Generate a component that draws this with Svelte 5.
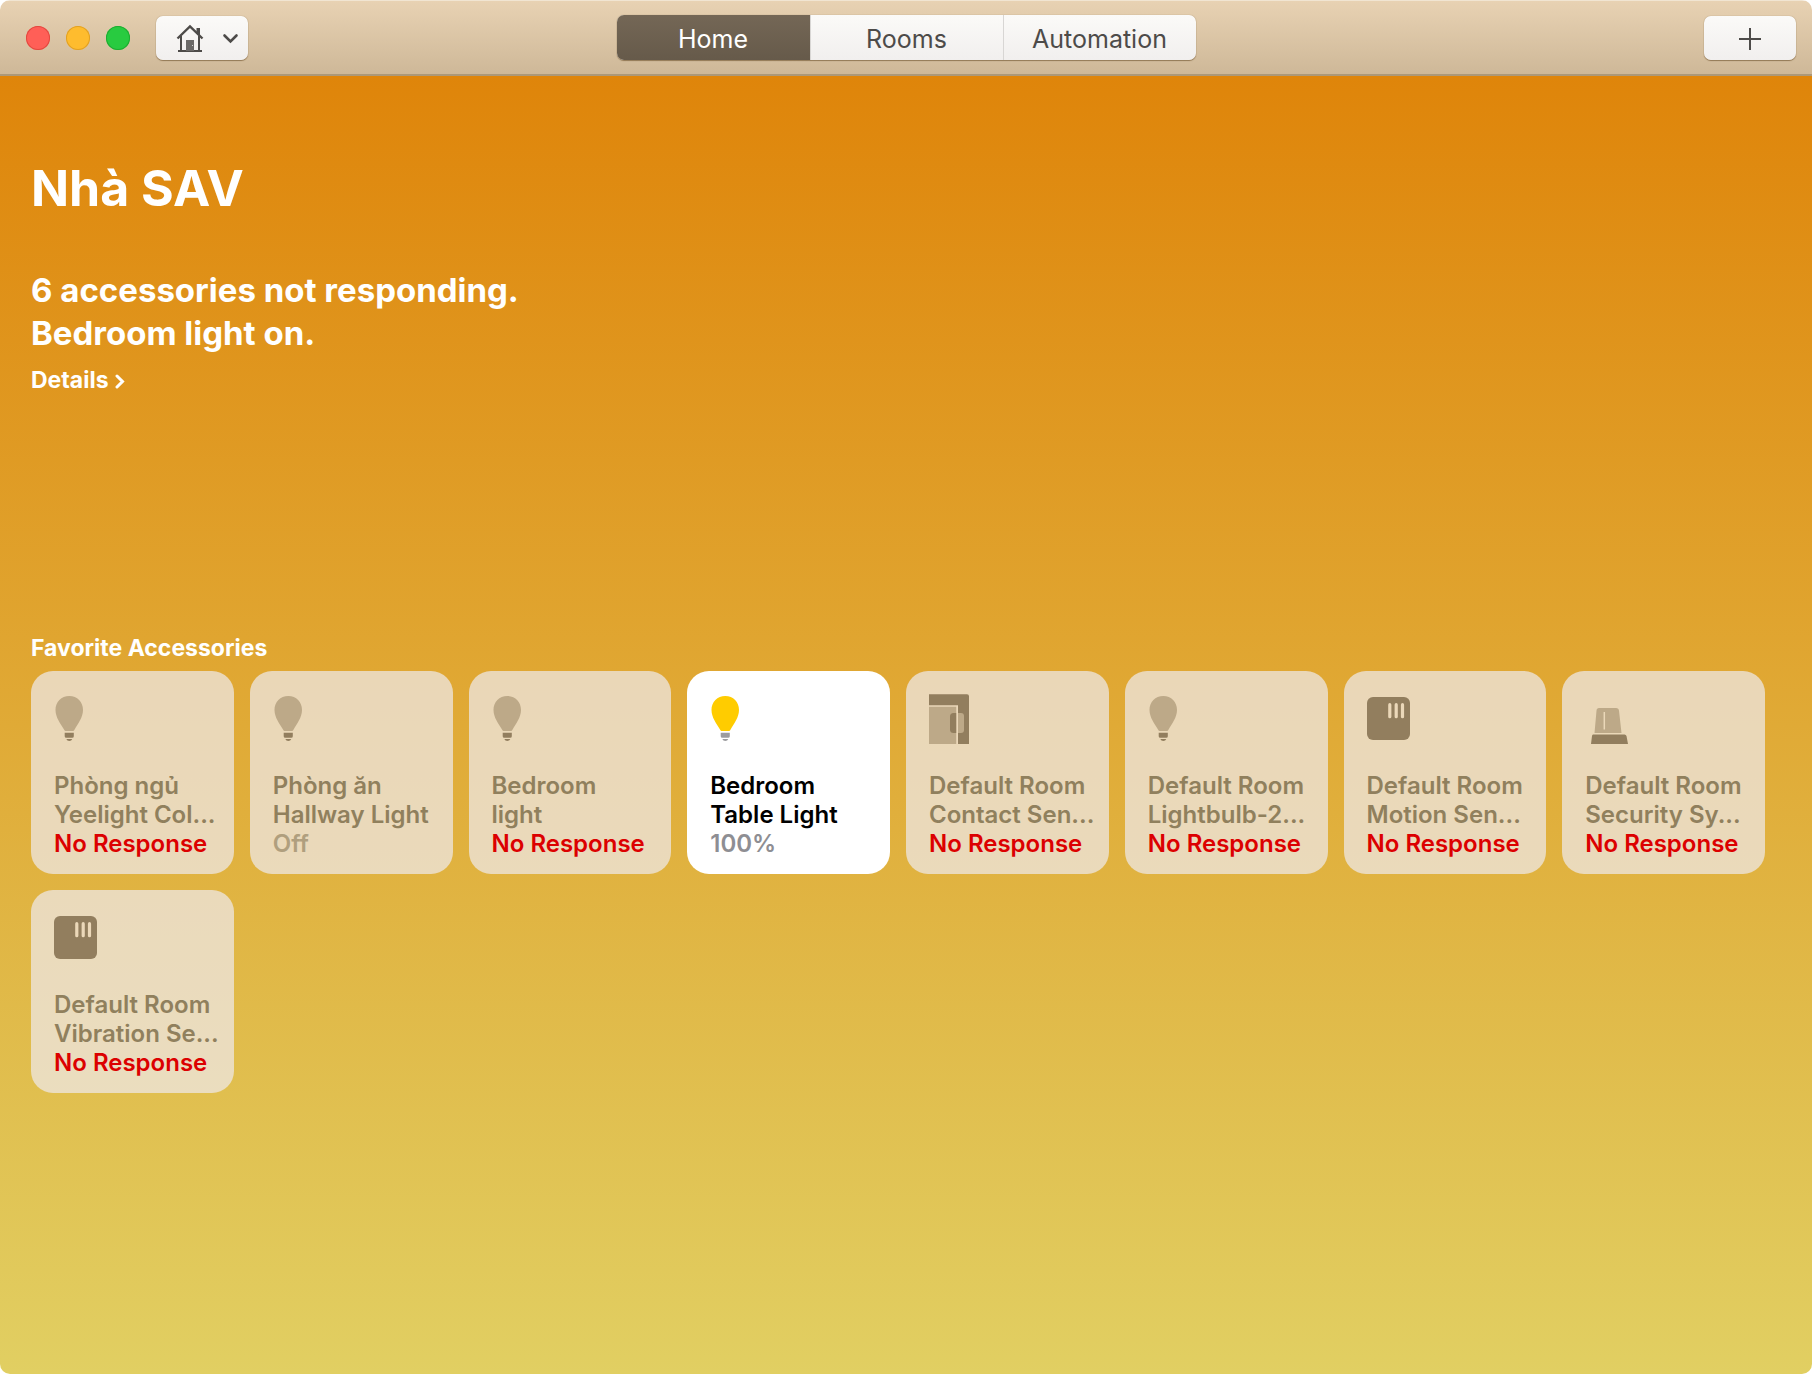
<script>
	let tabs = ['Home', 'Rooms', 'Automation'];
	let current = 'Home';

	let accessories = [
		{ icon: 'bulb', room: 'Phòng ngủ', name: 'Yeelight Col...', status: 'No Response' },
		{ icon: 'bulb', room: 'Phòng ăn', name: 'Hallway Light', status: 'Off' },
		{ icon: 'bulb', room: 'Bedroom', name: 'light', status: 'No Response' },
		{ icon: 'bulb', room: 'Bedroom', name: 'Table Light', status: '100%', on: true },
		{ icon: 'contact', room: 'Default Room', name: 'Contact Sen...', status: 'No Response' },
		{ icon: 'bulb', room: 'Default Room', name: 'Lightbulb-2...', status: 'No Response' },
		{ icon: 'sensor', room: 'Default Room', name: 'Motion Sen...', status: 'No Response' },
		{ icon: 'siren', room: 'Default Room', name: 'Security Sy...', status: 'No Response' },
		{ icon: 'sensor', room: 'Default Room', name: 'Vibration Se...', status: 'No Response' }
	];

	let toggle = (item) => {
		if (item.status === 'No Response') return;
		item.on = !item.on;
		item.status = item.on ? '100%' : 'Off';
		accessories = accessories;
	}
</script>

<svelte:head>
	<title>Home</title>
</svelte:head>

<div class="window">
	<header>
		<div class="left">
			<div class="lights">
				<button class="light close" aria-label="Close"></button>
				<button class="light minimize" aria-label="Minimize"></button>
				<button class="light zoom" aria-label="Zoom"></button>
			</div>
			<button class="tool" aria-label="Choose home">
				<svg width="92" height="44" viewBox="0 0 92 44" fill="none" stroke="#4d4b49">
					<path d="M21.5 22.5L34 10.5l12.5 12" stroke-width="2.4" />
					<path d="M40.5 12H44v8l-3.5-3.500z" fill="#4d4b49" stroke="none" />
					<path d="M25 20v15M43 20v15M22 35h24" stroke-width="2" />
					<path d="M30 24h8v11h-8z" fill="#6b6967" stroke="none" />
					<circle cx="36.5" cy="29.5" r=".5" fill="#fff" stroke="none" />
					<path d="M68.5 19.5l6 6 6-6" stroke-width="2.6" stroke-linecap="round" />
				</svg>
			</button>
		</div>
		<nav>
			{#each tabs as tab}
				<button class:active={tab === current} on:click={() => current = tab}>{tab}</button>
			{/each}
		</nav>
		<div class="right">
			<button class="tool" aria-label="Add">
				<svg width="92" height="44" viewBox="0 0 92 44" stroke="#4d4b49" stroke-width="2">
					<path d="M35 23h22M46 12v22" />
				</svg>
			</button>
		</div>
	</header>

	<main>
		<h1>Nhà SAV</h1>
		<p class="summary">6 accessories not responding.<br>Bedroom light on.</p>
		<a class="details" href="#details">
			Details
			<svg width="10" height="16" viewBox="0 0 10 16" fill="none" stroke="#fff" stroke-width="3" stroke-linecap="round">
				<path d="M2 3l5.5 5.5L2 14" />
			</svg>
		</a>

		<h2>Favorite Accessories</h2>
		<div class="grid">
			{#each accessories as item}
				<button class="tile" class:on={item.on} on:click={() => toggle(item)}>
					<svg width="50" height="50" viewBox="0 0 50 50">
						{#if item.icon === 'bulb'}
							<path class="soft" d="M15.3 2C7.3 2 1.5 8 1.5 16c0 7.5 5 13.5 8.5 19.5.6 1 1 1.500 2 1.500h6.600c1 0 1.400-.5 2-1.500C24 29.500 29 23.500 29 16 29 8 23.300 2 15.300 2z" />
							<path class="base" d="M10.700 38.800h9.100v3.400q0 1.600-1.600 1.600h-5.900q-1.600 0-1.600-1.600zM12.300 45h6q-.8 2-3 2t-3-2z" />
						{:else if item.icon === 'contact'}
							<path class="base" d="M0 .3h38q2 0 2 2V50H29V11.200H0z" />
							<path class="soft" d="M0 12.800h27.500V50H0z" />
							<path class="base" d="M27.500 19v20h-3q-3.500 0-3.500-3.500v-13q0-3.500 3.500-3.500z" />
							<path class="soft" d="M29 19h3q3 0 3 3v14q0 3-3 3h-3z" />
							<path class="line" d="M28.250 12v38" />
						{:else if item.icon === 'sensor'}
							<rect class="base" y="3" width="43" height="43" rx="6" />
							<path class="slots" d="M22.800 10.700v12M29.200 10.700v12M35.500 10.700v12" />
						{:else}
							<path class="soft" d="M14 14h17q2.700 0 3 2.700L36.500 39h-27l2-22.300q.2-2.700 2.500-2.700z" />
							<path class="line" d="M19.300 18v17.500" />
							<path class="base" d="M7.500 40.600h32q1.500 0 2 1.500l1.500 7.900H6l1-7.900q.2-1.500 1-1.500z" />
						{/if}
					</svg>
					<span class="label">
						<span>{item.room}</span>
						<span>{item.name}</span>
						<span class="status" class:error={item.status === 'No Response'}>{item.status}</span>
					</span>
				</button>
			{/each}
		</div>
	</main>
</div>

<style>
	:global(body) {
		background: #fff;
		font-family: Inter, "Liberation Sans", sans-serif;
	}

	button {
		margin: 0;
		padding: 0;
		border: 0;
		font: inherit;
		color: inherit;
	}

	svg {
		display: block;
	}

	.window {
		display: flex;
		flex-direction: column;
		min-height: 100vh;
		border-radius: 10px;
		overflow: hidden;
	}

	header {
		display: grid;
		grid-template-columns: 1fr auto 1fr;
		align-items: center;
		box-sizing: border-box;
		height: 76px;
		padding: 0 16px;
		background: linear-gradient(#e8d2b3, #ceb898);
		border-top: 1px solid #f1e5d2;
		border-bottom: 2px solid #ac9878;
	}

	.left {
		display: flex;
		align-items: center;
		gap: 26px;
		padding-left: 10px;
	}

	.right {
		display: flex;
		justify-content: flex-end;
	}

	.lights {
		display: flex;
		gap: 16px;
	}

	.light {
		width: 24px;
		height: 24px;
		border-radius: 50%;
	}

	.close {
		background: #ff5f57;
		box-shadow: inset 0 0 0 1px #e2493f;
	}

	.minimize {
		background: #febc2e;
		box-shadow: inset 0 0 0 1px #e1a024;
	}

	.zoom {
		background: #28cb40;
		box-shadow: inset 0 0 0 1px #1eac30;
	}

	.tool,
	nav {
		background: linear-gradient(#fbfaf8, #f1efee);
		border-radius: 7px;
		box-shadow: 0 0 1px rgba(90, 60, 20, 0.5), 0 1px 1px rgba(90, 60, 20, 0.5);
	}

	nav {
		display: flex;
		overflow: hidden;
	}

	nav button {
		width: 193px;
		height: 45px;
		padding-top: 2px;
		background: none;
		font-size: 25px;
		color: #4d4b49;
	}

	nav button + button {
		border-left: 1px solid #d8d6d4;
	}

	nav .active {
		background: linear-gradient(#746756, #665a4a);
		color: #fff;
	}

	main {
		flex: 1;
		padding: 80px 47px 80px 31px;
		background: linear-gradient(#df850a, #e1cf62);
		color: #fff;
	}

	h1 {
		margin: 0 0 49px;
		font-size: 50px;
		line-height: 64px;
		font-weight: 700;
	}

	.summary {
		margin: 0 0 11px;
		font-size: 33px;
		line-height: 43px;
		font-weight: 700;
	}

	.details {
		display: flex;
		align-items: center;
		gap: 6px;
		width: max-content;
		font-size: 23px;
		line-height: 29px;
		font-weight: 700;
		color: #fff;
		text-decoration: none;
	}

	h2 {
		margin: 239px 0 8px;
		font-size: 23px;
		line-height: 29px;
		font-weight: 700;
	}

	.grid {
		display: grid;
		grid-template-columns: repeat(auto-fill, minmax(200px, 1fr));
		gap: 16px;
	}

	.tile {
		display: flex;
		flex-direction: column;
		justify-content: space-between;
		box-sizing: border-box;
		aspect-ratio: 1;
		padding: 23px 16px 16px 23px;
		border-radius: 22px;
		background: rgba(238, 231, 228, 0.75);
		color: #90805d;
		font-size: 24px;
		line-height: 29px;
		font-weight: 600;
		text-align: left;
		white-space: nowrap;
	}

	.label {
		display: flex;
		flex-direction: column;
	}

	.status {
		color: #b09f7e;
	}

	.error {
		color: #dc0000;
	}

	.soft {
		fill: #bda988;
	}

	.base {
		fill: #927e5e;
	}

	.line,
	.slots {
		fill: none;
		stroke: #ebd8b9;
		stroke-width: 1.5;
	}

	.slots {
		stroke-width: 3.2;
		stroke-linecap: round;
	}

	.on {
		background: #fff;
		color: #000;
	}

	.on .status {
		color: #8e8e93;
	}

	.on .soft {
		fill: #ffcc00;
	}

	.on .base {
		fill: #9c9c9f;
	}
</style>
